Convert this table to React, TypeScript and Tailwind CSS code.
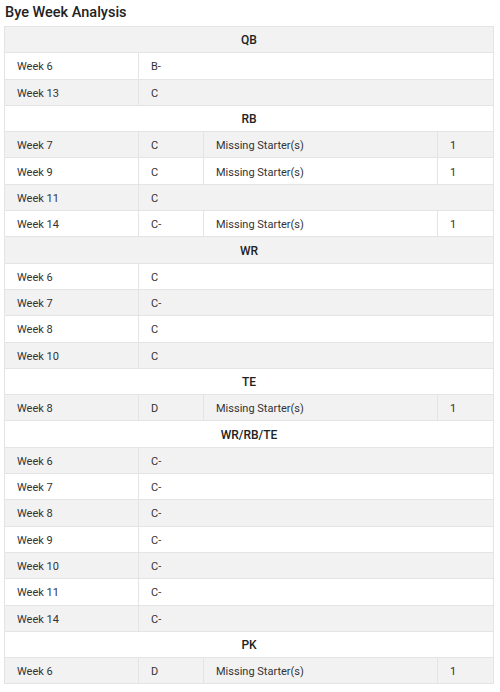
import React from "react";

type Row =
  | { kind: "h"; label: string }
  | { kind: "r"; week: string; grade: string; missing?: string };

const rows: Row[] = [
  { kind: "h", label: "QB" },
  { kind: "r", week: "Week 6", grade: "B-" },
  { kind: "r", week: "Week 13", grade: "C" },
  { kind: "h", label: "RB" },
  { kind: "r", week: "Week 7", grade: "C", missing: "1" },
  { kind: "r", week: "Week 9", grade: "C", missing: "1" },
  { kind: "r", week: "Week 11", grade: "C" },
  { kind: "r", week: "Week 14", grade: "C-", missing: "1" },
  { kind: "h", label: "WR" },
  { kind: "r", week: "Week 6", grade: "C" },
  { kind: "r", week: "Week 7", grade: "C-" },
  { kind: "r", week: "Week 8", grade: "C" },
  { kind: "r", week: "Week 10", grade: "C" },
  { kind: "h", label: "TE" },
  { kind: "r", week: "Week 8", grade: "D", missing: "1" },
  { kind: "h", label: "WR/RB/TE" },
  { kind: "r", week: "Week 6", grade: "C-" },
  { kind: "r", week: "Week 7", grade: "C-" },
  { kind: "r", week: "Week 8", grade: "C-" },
  { kind: "r", week: "Week 9", grade: "C-" },
  { kind: "r", week: "Week 10", grade: "C-" },
  { kind: "r", week: "Week 11", grade: "C-" },
  { kind: "r", week: "Week 14", grade: "C-" },
  { kind: "h", label: "PK" },
  { kind: "r", week: "Week 6", grade: "D", missing: "1" },
];

const td = "border border-[#e4e4e4] pl-[12px] pt-[2px] pb-0 pr-0 h-[26.3px] align-middle";

export default function App() {
  return (
    <div className="w-[500px] h-[692px] bg-white text-[#333]" style={{ fontFamily: "Roboto, 'Liberation Sans', sans-serif" }}>
      <div className="pl-[5px] pt-[3px] text-[14.5px] leading-[19px] font-medium text-[#222]">Bye Week Analysis</div>
      <table className="ml-[4px] mt-[4px] w-[490px] border-collapse text-[11px] leading-[13px] table-fixed">
        <colgroup>
          <col className="w-[134px]" />
          <col className="w-[65px]" />
          <col className="w-[234px]" />
          <col />
        </colgroup>
        <tbody>
          {rows.map((r, i) => {
            const bg = i % 2 === 0 ? "bg-[#f2f2f2]" : "bg-white";
            if (r.kind === "h") {
              return (
                <tr key={i} className={bg}>
                  <td colSpan={4} className="border border-[#e4e4e4] h-[26.3px] pt-[2px] pb-0 px-0 text-center align-middle text-[12px] font-medium text-[#222]">
                    {r.label}
                  </td>
                </tr>
              );
            }
            return (
              <tr key={i} className={bg}>
                <td className={td}>{r.week}</td>
                {r.missing ? (
                  <>
                    <td className={td}>{r.grade}</td>
                    <td className={td}>Missing Starter(s)</td>
                    <td className={td}>{r.missing}</td>
                  </>
                ) : (
                  <td colSpan={3} className={td}>{r.grade}</td>
                )}
              </tr>
            );
          })}
        </tbody>
      </table>
    </div>
  );
}
